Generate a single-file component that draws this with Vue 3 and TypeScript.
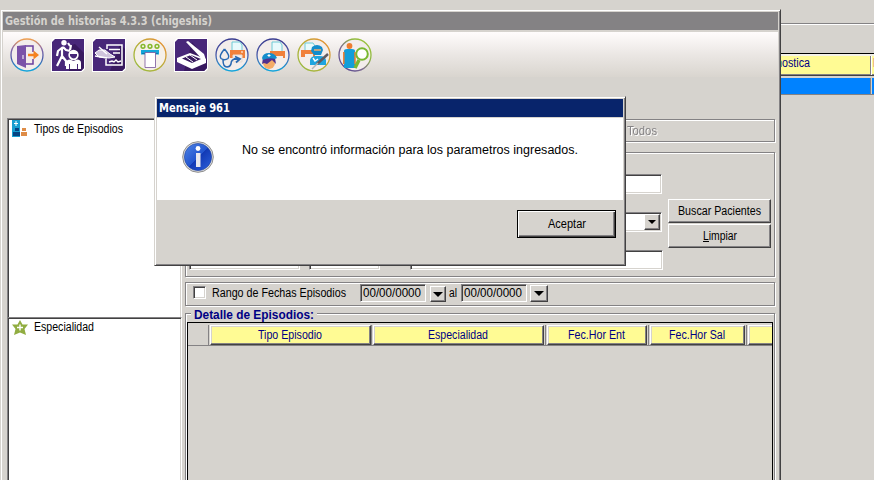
<script setup lang="ts">
import { h } from 'vue'

interface FitProps { text: string; w: number; b?: number; u?: boolean }

// Single-line label that always occupies exactly `w` pixels.
const Fit = (p: FitProps) =>
  h('svg', { class: 'fit', width: p.w, height: 16 }, [
    h('text', { x: 0, y: p.b ?? 12, textLength: p.w, lengthAdjust: 'spacingAndGlyphs', fill: 'currentColor' }, p.text),
    p.u ? h('path', { d: 'M0 13.5h6', stroke: 'currentColor' }) : null,
  ])
Fit.props = ['text', 'w', 'b', 'u']

const columns = [
  { text: 'Tipo Episodio', w: 64, cell: 'c1' },
  { text: 'Especialidad', w: 60, cell: 'c2' },
  { text: 'Fec.Hor Ent', w: 57, cell: 'c3' },
  { text: 'Fec.Hor Sal', w: 56, cell: 'c4' },
]
</script>

<template>
  <div class="desktop">
    <section class="back">
      <div class="back-top"></div>
      <div class="back-rule"></div>
      <div class="back-head"><div class="bh"><Fit class="diag" text="Diagnostica" :w="56" /></div><div class="bh2"><Fit text="D" :w="7" /></div></div>
      <div class="back-row"><i></i><b></b></div>
    </section>

    <section class="window">
      <header class="title inactive"><Fit text="Gestión de historias 4.3.3 (chigeshis)" :w="207" /></header>
      <nav class="toolbar">
        <svg class="ico" viewBox="0 0 34 34">
          <defs>
            <linearGradient id="gb" x1="0" y1="1" x2="1" y2="0"><stop offset="0" stop-color="#18a6d4" /><stop offset=".15" stop-color="#a0b83c" /><stop offset=".5" stop-color="#b8ae3a" /><stop offset="1" stop-color="#f08a30" /></linearGradient>
            <linearGradient id="gc" x1="0" y1="0" x2="0" y2="1"><stop offset="0" stop-color="#3a3c90" /><stop offset=".5" stop-color="#4b59a8" /><stop offset="1" stop-color="#10a5dc" /></linearGradient>
            <linearGradient id="ge" x1="0" y1="0" x2="0" y2="1"><stop offset="0" stop-color="#f0a050" /><stop offset=".3" stop-color="#8a6aa8" /><stop offset=".6" stop-color="#4b59a8" /><stop offset="1" stop-color="#10a5dc" /></linearGradient>
            <linearGradient id="gd" x1="0" y1="1" x2="1" y2="0"><stop offset="0" stop-color="#4a3a90" /><stop offset=".4" stop-color="#7d6a90" /><stop offset=".7" stop-color="#90ba40" /><stop offset="1" stop-color="#a3c63c" /></linearGradient>
          </defs>
          <circle cx="17" cy="17" r="16" fill="#f3edeb" stroke="url(#ge)" stroke-width="1.3" />
          <path d="M15 8h8v6M23 21v5h-7" fill="none" stroke="#6b3fa0" stroke-width="1.5" />
          <path d="M7 8l9-1v23l-9-4z" fill="#7a52a8" /><path d="M13 17v4" stroke="#fff" />
          <path d="M18 15.700h5.500v-3.200l5.500 4.500-5.500 4.500v-3.200h-5.500z" fill="#f58220" />
        </svg>
        <svg class="ico" viewBox="0 0 34 34">
          <path d="M3 0h31v31l-3 3H0V3z" fill="#fff" /><path d="M4 1h29v29l-3 3H1V4z" fill="#482779" /><path d="M18 8l6-2 9 9v15l-3 3H18z" fill="#38195f" />
          <circle cx="13" cy="4.800" r="2.700" fill="#fff" />
          <path d="M12 9l-5 4-1 5M12 9l3 3 4 1M11 10v8l-5 10M11 18l4 5v5M17 5l2 3M19 12l1-5" fill="none" stroke="#fff" stroke-width="2.200" stroke-linejoin="round" />
          <circle cx="22.500" cy="17" r="5.200" fill="#fff" /><path d="M19 16h7v2q-3 5-7 0z" fill="#482779" />
          <path d="M15 31v-6q0-3.500 4-3.500l3.500 1.500 3.500-1.500q4 0 4 3.500v6z" fill="#fff" /><path d="M18.500 31v-5M26.500 31v-5" stroke="#482779" />
        </svg>
        <svg class="ico" viewBox="0 0 34 34">
          <path d="M3 0h31v31l-3 3H0V3z" fill="#fff" /><path d="M4 1h29v29l-3 3H1V4z" fill="#482779" /><path d="M28 6l5 5v19l-3 3H18z" fill="#38195f" />
          <path d="M15 11V7h15v20H14v-6" fill="none" stroke="#fff" stroke-width="1.500" /><path d="M17 11.500h11M21 15h7M17 24l3-1 2 1 2-2 2 2 3-1" stroke="#fff" stroke-width="1.400" fill="none" />
          <path d="M3 15l4-3h6l5 4 5 3-6 1-10-1z" fill="#cfc4dc" stroke="#fff" /><path d="M7 9l8 7M3 18l12 2" fill="none" stroke="#fff" stroke-width="1.500" />
        </svg>
        <svg class="ico" viewBox="0 0 34 34">
          <circle cx="17" cy="17" r="16" fill="#f5f0e9" stroke="url(#gb)" stroke-width="1.300" />
          <g fill="none" stroke="#85b82b" stroke-width="1.500"><circle cx="10" cy="8.300" r="1.900" /><circle cx="17" cy="8.300" r="1.900" /><circle cx="24" cy="8.300" r="1.900" /></g>
          <path d="M8 12h18v4.500H8z" fill="#13a5d9" /><path d="M9 15.500h16" stroke="#087bad" /><path d="M12 14.500h10.500v15H12z" fill="#fff" stroke="#79549a" stroke-width=".8" />
        </svg>
        <svg class="ico" viewBox="0 0 34 34">
          <path d="M3 0h31v31l-3 3H0V3z" fill="#fff" /><path d="M4 1h29v29l-3 3H1V4z" fill="#482779" /><path d="M18 4l15 17v9l-3 3H10z" fill="#38195f" />
          <path d="M12 4l2-1 16 13 2 6-4-1z" fill="#fff" /><path d="M3 20l13-5 16 6v4l-14 6L3 24z" fill="#fff" /><path d="M8 20.500l9-3.500 10 4-9 4z" fill="#38195f" /><path d="M16 17l7 5M12 19l7 5" stroke="#fff" />
        </svg>
        <svg class="ico" viewBox="0 0 34 34">
          <circle cx="17" cy="17" r="16" fill="#f3edeb" stroke="url(#gc)" stroke-width="1.300" />
          <path d="M17 12V4h8l2 3v5" fill="#e9fafc" stroke="#6fcbd6" /><path d="M15 12h15v8H15z" fill="#f0803a" /><path d="M18 17h9v7h-9z" fill="#f4eee9" stroke="#e5dbd5" /><path d="M26 14h2" stroke="#fff" />
          <path d="M9.500 11q-6 7-3.500 9.500 3.500 2.500 7 0 2.500-2.500-3.500-9.500M8 22q0 7 4 7 3 0 4-3 0-5 5-5h2" fill="none" stroke="#2868b2" stroke-width="1.500" /><path d="M20 18.500l5 2.500-4 3.500M19 21h6" fill="none" stroke="#2868b2" stroke-width="1.800" />
        </svg>
        <svg class="ico" viewBox="0 0 34 34">
          <circle cx="17" cy="17" r="16" fill="#f3edeb" stroke="url(#gc)" stroke-width="1.300" />
          <path d="M16 13V4h8l2 3v6" fill="#e9fafc" stroke="#6fcbd6" /><path d="M14 13h15v7H14z" fill="#f0803a" /><path d="M18 18h9v6h-9z" fill="#f4eee9" />
          <circle cx="13" cy="25" r="6" fill="#f4ac68" /><path d="M6 26l1-6h12l1 6-4-4-5 4-3-1z" fill="#51308d" /><path d="M6 20q1-5 7-5t8 5l-2 1q-6-2-12 1z" fill="#148dcc" /><path d="M13 16v3M11.500 17.500h3" stroke="#fff" />
        </svg>
        <svg class="ico" viewBox="0 0 34 34">
          <circle cx="17" cy="17" r="16" fill="#f3edeb" stroke="url(#gb)" stroke-width="1.300" />
          <path d="M8 12V5h8l2 3v4" fill="#e9fafc" stroke="#6fcbd6" /><path d="M4 12h14v7H4z" fill="#f0803a" /><path d="M8 16h8v7H8z" fill="#f4eee9" />
          <path d="M15 9q5-4 10 0l1 3-2 5h-7l-3-4z" fill="#148dcc" /><path d="M17 12h7" stroke="#f4ac68" stroke-width="1.500" /><path d="M13 27v-5q1-4 6-4h4q5 0 6 4v5z" fill="#20a5df" /><path d="M16 20l2 3 3-2" fill="none" stroke="#fff" stroke-width="1.500" /><path d="M31 16L20 26" stroke="#605b62" stroke-width="2.500" /><path d="M21 25l-6 6" stroke="#b5b5b5" stroke-width="1.500" />
        </svg>
        <svg class="ico" viewBox="0 0 34 34">
          <circle cx="17" cy="17" r="16" fill="#f3edeb" stroke="url(#gd)" stroke-width="1.300" />
          <circle cx="11.500" cy="8" r="2.900" fill="#ed7d2f" /><path d="M6 13q0-2 3-2h5q3 0 3 2v17H6z" fill="#139ed9" /><path d="M5.800 14v12M17 14v12" stroke="#ed7d2f" stroke-width="1.500" />
          <path d="M21 22l-4 8" stroke="#79b831" stroke-width="3.500" /><circle cx="24" cy="16" r="5.800" fill="#fff" stroke="#79b831" stroke-width="2" />
        </svg>
      </nav>

      <div class="body">
        <aside class="side">
          <div class="pane first">
            <svg class="pico" width="16" height="17" viewBox="0 0 16 17"><path d="M0 0h8v17H0z" fill="#189ed0" /><path d="M4 1v5M2 3.500h4" stroke="#fff" /><path d="M3 8h4v3H3zM1 12h7v4H1z" fill="#064583" /><path d="M10 8h4v3h-4zM9 12h6v4H9z" fill="#de8c47" /></svg>
            <Fit text="Tipos de Episodios" :w="89" />
          </div>
          <div class="pane second">
            <svg class="pico star" width="16" height="15" viewBox="0 0 16 15"><path d="M8 0l2.500 4.500H16L12.500 9l1.500 6-6-2.500L2 15l1.500-6L0 4.500h5.500z" fill="#91ad41" /><path d="M8 4.500v6M5 7.500h6" stroke="#fff" stroke-width="1.400" /></svg>
            <Fit text="Especialidad" :w="60" />
          </div>
        </aside>

        <main class="main">
          <div class="group g1"><Fit class="disabled" text="Todos" :w="30" /></div>
          <div class="group g2">
            <div class="fields">
              <div class="input full"></div>
              <div class="input full combo"><span class="drop"></span></div>
              <div class="thirds"><div class="input ta"></div><div class="input tb"></div><div class="input tc"></div></div>
            </div>
            <div class="actions">
              <button class="btn"><Fit text="Buscar Pacientes" :w="83" /></button>
              <button class="btn"><Fit text="Limpiar" :w="34" :u="true" /></button>
            </div>
          </div>
          <div class="group g3">
            <span class="check"></span>
            <Fit text="Rango de Fechas Episodios" :w="134" />
            <span class="input date"><Fit text="00/00/0000" :w="58" /></span>
            <span class="drop d1"></span>
            <Fit text="al" :w="8" />
            <span class="input date e"><Fit text="00/00/0000" :w="58" /></span>
            <span class="drop d2"></span>
          </div>
          <div class="group g4">
            <div class="legend"><Fit text="Detalle de Episodios:" :w="120" :b="11" /></div>
            <div class="grid">
              <div class="ghead">
                <span class="corner"></span>
                <div v-for="c in columns" :key="c.cell" class="col" :class="c.cell"><Fit :text="c.text" :w="c.w" /></div>
                <div class="col c5"></div>
              </div>
            </div>
          </div>
        </main>
      </div>
    </section>

    <section class="dialog">
      <header class="title active"><Fit text="Mensaje 961" :w="71" /></header>
      <div class="msg">
        <svg class="info" width="32" height="32" viewBox="0 0 32 32">
          <defs><linearGradient id="gi" x1="0" y1="0" x2="1" y2="1"><stop offset="0" stop-color="#4f86e6" /><stop offset=".5" stop-color="#2355cf" /><stop offset=".51" stop-color="#1239b4" /><stop offset="1" stop-color="#2d62dc" /></linearGradient></defs>
          <circle cx="16" cy="16" r="15.300" fill="#ddd" stroke="#8c8c8c" /><circle cx="16" cy="16" r="13.600" fill="url(#gi)" stroke="#1c3f9e" stroke-width=".6" />
          <circle cx="16" cy="7.500" r="2.400" fill="#fff" /><path d="M14 12h4.500v14H14z" fill="#e8e8ee" />
        </svg>
        <Fit class="msgtext" text="No se encontró información para los parametros ingresados." :w="336" :b="13" />
      </div>
      <footer class="foot"><button class="ok"><Fit text="Aceptar" :w="38" /></button></footer>
    </section>
  </div>
</template>

<style>
body { background: #d6d3ce; overflow: hidden; }
</style>

<style scoped>
* { box-sizing: border-box; }
.desktop { position: relative; width: 874px; height: 480px; overflow: hidden; background: #d6d3ce; font: 12.5px "Liberation Sans", sans-serif; color: #000; }
.fit { display: block; flex: none; overflow: visible; }
.back { position: absolute; left: 781px; top: 0; width: 93px; overflow: hidden; }
.back-top { height: 25px; border-bottom: 1px solid #fff; box-shadow: inset 0 -1px #848284; }
.back-rule { height: 29px; border-bottom: 1px solid #000; }
.back-head { display: flex; height: 22px; border-top: 2px solid #f4f2e8; border-bottom: 1px solid #424142; background: #fffb94; box-shadow: inset 0 -1px #848284; color: #000084; }
.bh { width: 91px; flex: none; border-right: 1px solid #fff; box-shadow: inset -1px 0 #848284; }
.diag { margin-left: -27px; margin-top: -1px; }
.bh2 { padding-left: 1px; margin-top: -1px; }
.back-row { display: flex; height: 19px; border-top: 2px solid #d6d3ce; border-bottom: 1px solid #848284; background: #0082ff; }
.back-row i { width: 89px; } .back-row b { width: 2px; background: #d6d3ce; border-left: 1px solid #848284; }
.window, .dialog { position: absolute; background: #d6d3ce; border: 1px solid; border-color: #d6d3ce #424142 #424142 #d6d3ce; box-shadow: inset 1px 1px #fff, inset -1px -1px #848284; display: flex; flex-direction: column; }
.window { left: 0; top: 9px; width: 781px; height: 475px; padding: 2px; }
.dialog { left: 154px; top: 96px; width: 472px; height: 170px; padding: 2px; }
.title { height: 18px; flex: none; padding: 1px 0 0 2px; font: bold 11.5px "DejaVu Sans", sans-serif; }
.inactive { background: #848284; color: #d6d3ce; }
.active { background: #08246b; color: #fff; }
.toolbar { display: flex; flex: none; gap: 7px; height: 45px; margin-top: 2px; padding: 6px 0 0 7px; background: linear-gradient(#fffcfc, #ebe7e4 50%, #d9d5cf); }
.ico { width: 34px; height: 34px; display: block; flex: none; }
.body { flex: 1; min-height: 0; padding: 41px 2px 0 4px; display: flex; gap: 3px; }
.side { width: 175px; flex: none; display: flex; flex-direction: column; }
.pane, .input { background: #fff; border: 1px solid; border-color: #848284 #fff #fff #848284; box-shadow: inset 1px 1px #424142, inset -1px -1px #d6d3ce; }
.pane { display: flex; align-items: flex-start; }
.first { height: 199px; padding: 2px 0 0 4px; gap: 6px; border-bottom: 0; box-shadow: inset 1px 1px #424142, inset -1px 0 #d6d3ce; }
.second { flex: 1; padding: 1px 0 0 4px; gap: 5px; border-bottom: 0; }
.second .fit { margin-left: 1px; } .first .pico { margin-top: -1px; }
.star { margin-top: 1px; }
.main { width: 591px; flex: none; display: flex; flex-direction: column; padding-top: 1px; }
.group { border: 1px solid #848284; box-shadow: inset 1px 1px #fff, 1px 1px #fff; width: 590px; flex: none; }
.g1 { height: 23px; padding: 3px 0 0 441px; }
.disabled { color: #848284; filter: drop-shadow(1px 1px 0 #fff); }
.g2 { height: 125px; margin-top: 10px; padding: 21px 0 0 3px; display: flex; }
.fields { width: 474px; flex: none; display: flex; flex-direction: column; gap: 18px; }
.input { display: block; height: 20px; }
.full { width: 473px; }
.combo { display: flex; justify-content: flex-end; padding: 1px; }
.drop { width: 16px; height: 16px; flex: none; background: #d6d3ce; border: 1px solid; border-color: #fff #424142 #424142 #fff; box-shadow: inset -1px -1px #848284; display: flex; align-items: center; justify-content: center; }
.drop::after { content: ""; border: 4px solid transparent; border-top-color: #000; border-bottom: 0; }
.thirds { display: flex; }
.ta { width: 111px; } .tb { width: 71px; margin-left: 9px; } .tc { width: 253px; margin-left: 30px; }
.actions { margin: 25px 0 0 5px; display: flex; flex-direction: column; gap: 1px; }
.btn { width: 103px; height: 24px; padding: 0; font: inherit; color: #000; background: #d6d3ce; border: 1px solid; border-color: #fff #424142 #424142 #fff; box-shadow: inset -1px -1px #848284; display: flex; align-items: center; justify-content: center; }
.g3 { height: 24px; margin-top: 5px; display: flex; padding: 2px 0 0 7px; }
.check { width: 13px; height: 13px; margin: 1px 6px 0 0; background: #fff; border: 1px solid; border-color: #848284 #fff #fff #848284; box-shadow: inset 1px 1px #424142, inset -1px -1px #d6d3ce; }
.date { width: 66px; height: 18px; margin: -1px 0 0 14px; padding: 0 0 0 2px; background: #d6d3ce; }
.e { margin-left: 4px; }
.d1 { margin: 1px 3px 0 4px; }
.d1::after, .d2::after { border-width: 5px 5px 0; }
.d2 { margin: 0 0 0 3px; width: 18px; height: 17px; }
.g4 { height: 180px; margin-top: 7px; padding: 8px 0 0 1px; position: relative; }
.legend { position: absolute; left: 5px; top: -6px; background: #d6d3ce; padding: 0 3px; color: #000084; font-weight: bold; }
.legend .fit { height: 14px; }
.grid { width: 586px; height: 180px; border: 1px solid #000; overflow: hidden; }
.ghead { display: flex; height: 23px; width: 600px; padding-top: 2px; border-bottom: 1px solid #848284; }
.corner { width: 22px; flex: none; border-right: 1px solid #848284; }
.col { height: 20px; flex: none; background: #fffb94; border: 1px solid; border-color: #fff #424142 #424142 #fff; box-shadow: inset -1px -1px #848284, inset 1px 1px #d6d3ce, -1px 0 #d6d3ce, -2px 0 #848284; color: #000084; display: flex; justify-content: center; padding: 1px 1px 0 0; }
.c1 { width: 161px; } .c2 { width: 171px; margin-left: 2px; } .c3 { width: 100px; margin-left: 3px; } .c4 { width: 95px; margin-left: 3px; } .c5 { width: 60px; margin-left: 3px; }
.msg { height: 82px; flex: none; margin-top: 1px; background: #fff; display: flex; padding: 23px 0 0 25px; }
.msgtext { margin-left: 28px; }
.foot { display: flex; justify-content: flex-end; padding: 10px 7px 0 0; }
.ok { width: 99px; height: 28px; padding: 0; font: inherit; color: #000; background: #d6d3ce; border: 1px solid #000; box-shadow: inset 1px 1px #fff, inset -1px -1px #424142, inset -2px -2px #848284; display: flex; align-items: center; justify-content: center; }
</style>
